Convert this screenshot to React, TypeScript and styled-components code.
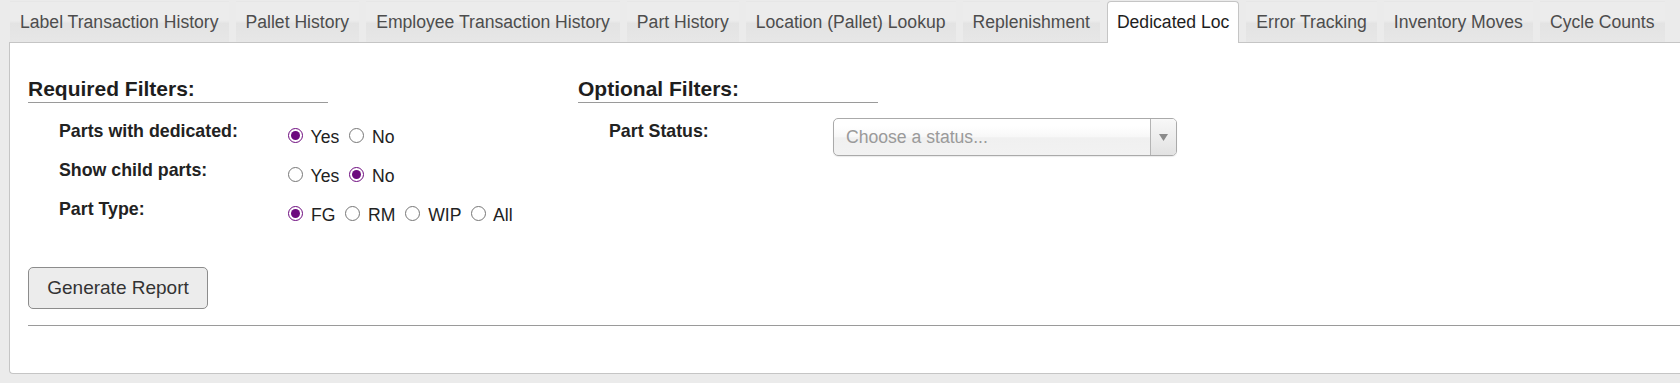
import React from 'react'
import styled, { createGlobalStyle } from 'styled-components'

const GlobalStyle = createGlobalStyle`
  html, body {
    margin: 0;
    padding: 0;
    background: #ebebeb;
    overflow: hidden;
  }
  body {
    font-family: "Liberation Sans", Arial, sans-serif;
    color: #222;
  }
`

const Page = styled.div`
  width: 1720px;
  padding: 1px 0 0 9px;
`

const TabNav = styled.div`
  display: flex;
  align-items: flex-start;
  gap: 7px;
  padding-left: 1px;
  position: relative;
  z-index: 1;
`

const Tab = styled.div<{ $active?: boolean }>`
  box-sizing: border-box;
  height: 41px;
  padding: 10px 9px 0;
  border: 1px solid transparent;
  border-bottom: none;
  font-size: 17.6px;
  line-height: 21px;
  white-space: nowrap;
  color: #4d4d4d;
  background: linear-gradient(to bottom, #ececec 0%, #ececec 46%, #e3e3e3 54%, #e7e7e7 100%);
  cursor: pointer;

  ${p => p.$active && `
    height: 42px;
    margin-bottom: -1px;
    background: #fff;
    border-color: #c5c5c5;
    border-radius: 4px 4px 0 0;
    color: #1e1e1e;
  `};
`

const Panel = styled.div`
  background: #fff;
  border: 1px solid #c5c5c5;
  border-right: none;
  border-radius: 0 0 0 4px;
  padding: 34px 0 47px 18px;
`

const Filters = styled.div`
  display: flex;
`

const Section = styled.div<{ $width?: number }>`
  width: ${p => (p.$width ? `${p.$width}px` : 'auto')};
`

const Heading = styled.div`
  width: 300px;
  font-size: 21px;
  font-weight: bold;
  line-height: 24px;
  padding-bottom: 1px;
  border-bottom: 1px solid #9a9a9a;
  color: #1e1e1e;
`

const Rows = styled.div`
  display: flex;
  flex-direction: column;
  gap: 19px;
  margin-top: 18px;
  padding-left: 31px;
`

const Row = styled.div`
  display: grid;
  grid-template-columns: 224px auto;
  align-items: start;
  height: 20px;
`

const Label = styled.div`
  font-size: 17.8px;
  font-weight: bold;
  line-height: 20px;
  color: #222;
`

const Options = styled.div`
  font-size: 17.6px;
  line-height: 20px;
  padding-top: 4px;
  white-space: nowrap;
`

const Radio = styled.input.attrs({ type: 'radio' })`
  width: 15px;
  height: 15px;
  margin: 3px 3px 0 5px;
  vertical-align: baseline;
  accent-color: #6d0a7e;
`

const Select = styled.div`
  box-sizing: border-box;
  width: 344px;
  height: 38px;
  margin-top: -3px;
  display: flex;
  border: 1px solid #aaa;
  border-radius: 5px;
  background: linear-gradient(to bottom, #fff 20%, #f7f7f7 50%, #f0f0f0 52%, #f2f2f2 100%);
  box-shadow: 0 1px 1px rgba(0, 0, 0, 0.08);
  overflow: hidden;
`

const Placeholder = styled.span`
  flex: 1;
  padding-left: 12px;
  font-size: 17.6px;
  line-height: 36px;
  color: #9a9a9a;
`

const Arrow = styled.span`
  width: 25px;
  border-left: 1px solid #b4b4b4;
  display: flex;
  align-items: center;
  justify-content: center;
  background: linear-gradient(to bottom, #f8f8f8, #e2e2e2);
`

const Button = styled.button`
  box-sizing: border-box;
  width: 180px;
  height: 42px;
  margin-top: 48px;
  border: 1px solid #8c8c8c;
  border-radius: 5px;
  background: #ececec;
  font-family: "Liberation Sans", Arial, sans-serif;
  font-size: 19px;
  color: #333;
  padding: 0;
`

const Rule = styled.div`
  margin-top: 16px;
  border-top: 1px solid #9a9a9a;
`

const tabs = [
  'Label Transaction History',
  'Pallet History',
  'Employee Transaction History',
  'Part History',
  'Location (Pallet) Lookup',
  'Replenishment',
  'Dedicated Loc',
  'Error Tracking',
  'Inventory Moves',
  'Cycle Counts',
]

type Choice = { label: string; checked?: boolean }

function renderChoices(name: string, choices: Choice[]) {
  return choices.map((c, i) => (
    <React.Fragment key={c.label}>
      {i > 0 && ' '}
      <Radio name={name} defaultChecked={c.checked} /> {c.label}
    </React.Fragment>
  ))
}

const App: React.FC = () => {
  return (
    <Page>
      <GlobalStyle />
      <TabNav>
        {tabs.map(t => (
          <Tab key={t} $active={t === 'Dedicated Loc'}>{t}</Tab>
        ))}
      </TabNav>
      <Panel>
        <Filters>
          <Section $width={550}>
            <Heading>Required Filters:</Heading>
            <Rows>
              <Row>
                <Label>Parts with dedicated:</Label>
                <Options>
                  {renderChoices('dedicated', [{ label: 'Yes', checked: true }, { label: 'No' }])}
                </Options>
              </Row>
              <Row>
                <Label>Show child parts:</Label>
                <Options>
                  {renderChoices('child', [{ label: 'Yes' }, { label: 'No', checked: true }])}
                </Options>
              </Row>
              <Row>
                <Label>Part Type:</Label>
                <Options>
                  {renderChoices('type', [
                    { label: 'FG', checked: true },
                    { label: 'RM' },
                    { label: 'WIP' },
                    { label: 'All' },
                  ])}
                </Options>
              </Row>
            </Rows>
          </Section>
          <Section>
            <Heading>Optional Filters:</Heading>
            <Rows>
              <Row>
                <Label>Part Status:</Label>
                <Select>
                  <Placeholder>Choose a status...</Placeholder>
                  <Arrow>
                    <svg width="9" height="7" viewBox="0 0 9 7">
                      <path d="M0 0 L9 0 L4.5 7 Z" fill="#8a8a8a" />
                    </svg>
                  </Arrow>
                </Select>
              </Row>
            </Rows>
          </Section>
        </Filters>
        <Button>Generate Report</Button>
        <Rule />
      </Panel>
    </Page>
  )
}

export default App
